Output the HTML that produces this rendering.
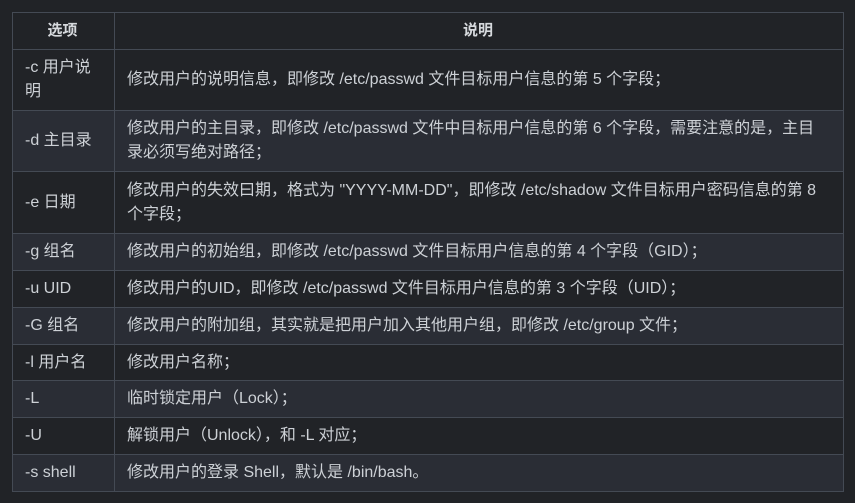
<!DOCTYPE html>
<html><head><meta charset="utf-8"><style>
html,body{margin:0;padding:0;background:#212327;width:855px;height:503px;overflow:hidden}
table{position:absolute;left:12px;top:12px;width:832px;border-collapse:collapse;font-family:"Liberation Sans","Noto Sans CJK SC",sans-serif;font-size:16px;color:#cdd1d6;line-height:24px;table-layout:fixed}
td,th{border:1px solid #444a54;padding:0 14px 0 12px;text-align:left}
th{font-weight:bold;text-align:center;height:36px;color:#d6d9dd;font-size:15px}
tr:nth-child(odd) td{background:#2a2d35}
col.a{width:102px}
</style></head><body>
<table>
<colgroup><col class="a"><col></colgroup>
<tr><th>选项</th><th>说明</th></tr>
<tr style="height:61px"><td>-c 用户说明</td><td>修改用户的说明信息，即修改 /etc/passwd 文件目标用户信息的第 5 个字段；</td></tr>
<tr style="height:61px"><td>-d 主目录</td><td>修改用户的主目录，即修改 /etc/passwd 文件中目标用户信息的第 6 个字段，需要注意的是，主目录必须写绝对路径；</td></tr>
<tr style="height:62px"><td>-e 日期</td><td>修改用户的失效曰期，格式为 "YYYY-MM-DD"，即修改 /etc/shadow 文件目标用户密码信息的第 8 个字段；</td></tr>
<tr style="height:37px"><td>-g 组名</td><td>修改用户的初始组，即修改 /etc/passwd 文件目标用户信息的第 4 个字段（GID）；</td></tr>
<tr style="height:37px"><td>-u UID</td><td>修改用户的UID，即修改 /etc/passwd 文件目标用户信息的第 3 个字段（UID）；</td></tr>
<tr style="height:37px"><td>-G 组名</td><td>修改用户的附加组，其实就是把用户加入其他用户组，即修改 /etc/group 文件；</td></tr>
<tr style="height:36px"><td>-l 用户名</td><td>修改用户名称；</td></tr>
<tr style="height:37px"><td>-L</td><td>临时锁定用户（Lock）；</td></tr>
<tr style="height:37px"><td>-U</td><td>解锁用户（Unlock），和 -L 对应；</td></tr>
<tr style="height:37px"><td>-s shell</td><td>修改用户的登录 Shell，默认是 /bin/bash。</td></tr>
</table>
</body></html>
